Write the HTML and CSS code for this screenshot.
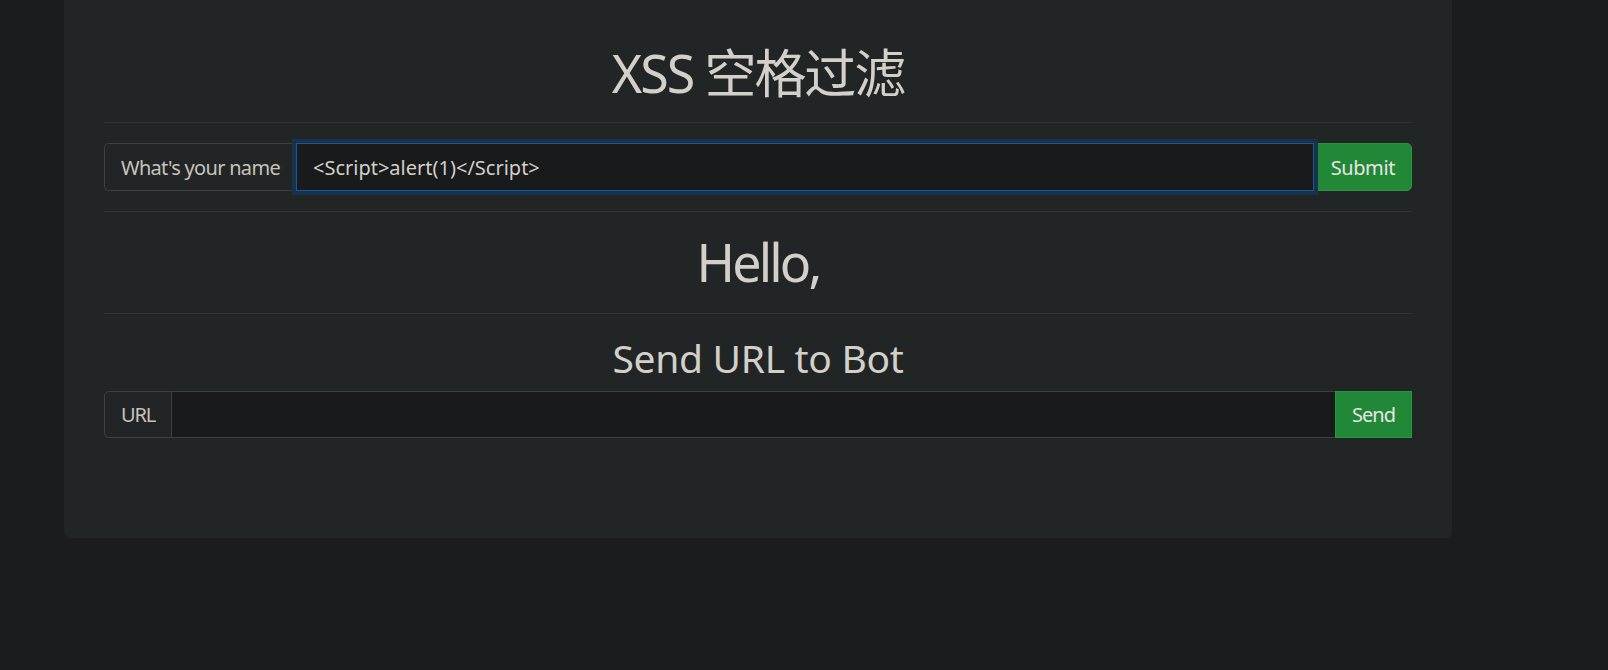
FILE: index.html
```html
<!DOCTYPE html>
<html lang="zh">
<head>
<meta charset="utf-8">
<title>XSS 空格过滤</title>
<link rel="stylesheet" href="styles.css">
</head>
<body>
<div class="card">
  <h1 class="title">XSS 空格过滤</h1>
  <hr class="rule">
  <form class="group">
    <span class="group-label">What's your name</span>
    <input class="group-input focused" type="text" value="<Script>alert(1)</Script>">
    <button class="group-btn" type="button">Submit</button>
  </form>
  <hr class="rule">
  <h1 class="hello">Hello,</h1>
  <hr class="rule">
  <h2 class="sub">Send URL to Bot</h2>
  <form class="group group-url">
    <span class="group-label">URL</span>
    <input class="group-input" type="text" value="">
    <button class="group-btn" type="button">Send</button>
  </form>
</div>
</body>
</html>
```
FILE: styles.css
```css
html, body {
  margin: 0;
  padding: 0;
  background: #1b1c1d;
  height: 100%;
}
body {
  font-family: "Noto Sans", "Noto Sans CJK SC", sans-serif;
  color: #d3cfc9;
  letter-spacing: -0.02em;
}
.card {
  margin-left: 64px;
  width: 1388px;
  box-sizing: border-box;
  padding: 42px 40px 100px;
  background: #222526;
  border-radius: 0 0 6px 6px;
}
.title, .hello {
  margin: 0;
  text-align: center;
  font-weight: 400;
  font-size: 52px;
  line-height: 62px;
}
.title {
  margin-bottom: 18px;
  letter-spacing: -0.04em;
}
.hello {
  margin-top: 19px;
  margin-bottom: 20px;
  letter-spacing: -0.055em;
}
.sub {
  margin: 20px 0 10px;
  text-align: center;
  font-weight: 400;
  font-size: 39px;
  line-height: 47px;
}
.rule {
  margin: 0;
  border: 0;
  border-top: 1px solid #303435;
  height: 0;
}
.group {
  display: flex;
  height: 48px;
  margin: 20px 0;
}
.group-url {
  margin: 0;
  height: 47px;
}
.group-label {
  display: flex;
  align-items: center;
  padding: 0 16px;
  font-size: 20px;
  letter-spacing: -0.035em;
  color: #c8c3bc;
  background: #222526;
  border: 1px solid #3c4143;
  border-right: 0;
  border-radius: 5px 0 0 5px;
  white-space: nowrap;
}
.group-url .group-label {
  border-right: 1px solid #3c4143;
  letter-spacing: -0.06em;
}
.group-input {
  flex: 1;
  min-width: 0;
  box-sizing: border-box;
  height: 100%;
  margin: 0;
  padding: 0 16px;
  font-family: inherit;
  letter-spacing: 0;
  font-size: 20px;
  color: #d3cfc9;
  background: #181a1b;
  border: 1px solid #3c4143;
  border-left: 0;
  border-right: 0;
  outline: none;
}
.group-input.focused {
  border: 1px solid #1b5594;
  box-shadow: 0 0 0 4px #17324d;
  position: relative;
  z-index: 1;
}
.group-btn {
  box-sizing: border-box;
  height: 100%;
  margin: 0;
  padding: 0 16px;
  font-family: inherit;
  letter-spacing: -0.02em;
  font-size: 20px;
  color: #e8e6e3;
  background: #218838;
  border: 1px solid #26963f;
  border-radius: 0 5px 5px 0;
  cursor: pointer;
}
.group-url .group-btn {
  border-radius: 0;
  letter-spacing: -0.05em;
}
```
